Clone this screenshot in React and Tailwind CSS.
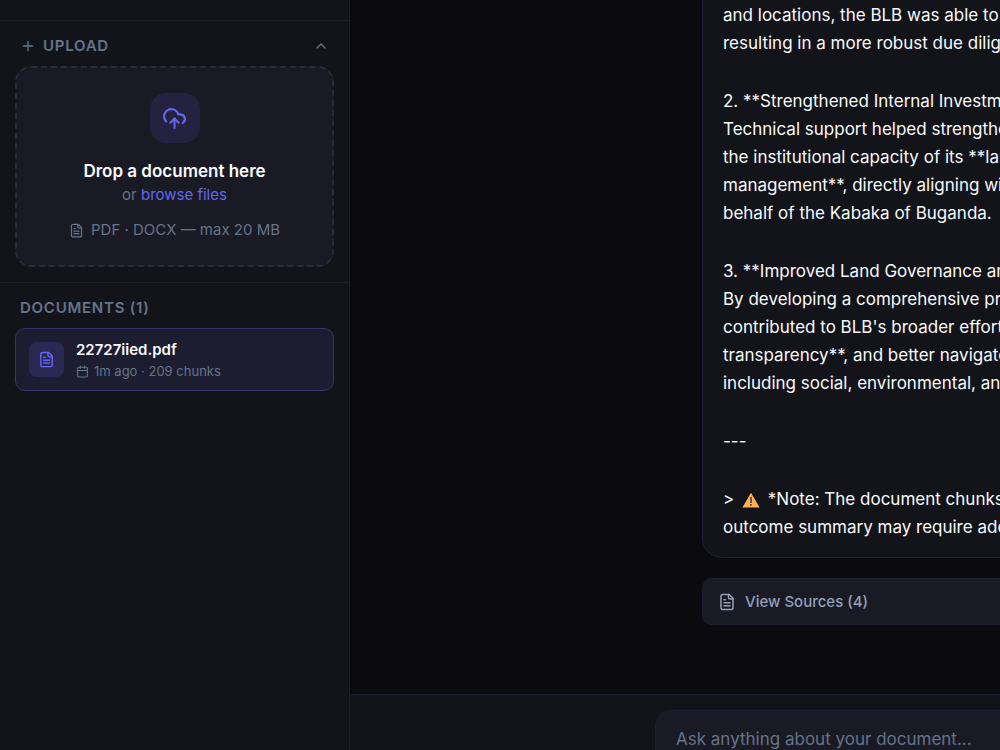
import React, { useState } from 'react';
import { Calendar, ChevronUp, Plus } from 'lucide-react';

const documents = [{ id: 1, name: '22727iied.pdf', age: '1m ago', chunks: 209 }];

const answer = [
    ['and locations, the BLB was able to', 'resulting in a more robust due diligence'],
    [
        '2. **Strengthened Internal Investment',
        'Technical support helped strengthen',
        'the institutional capacity of its **land',
        'management**, directly aligning with',
        'behalf of the Kabaka of Buganda.',
    ],
    [
        '3. **Improved Land Governance and',
        'By developing a comprehensive process',
        "contributed to BLB's broader efforts",
        'transparency**, and better navigate',
        'including social, environmental, and',
    ],
    ['---'],
];

const Icon = ({ size, children }) => (
    <svg
        width={size}
        height={size}
        viewBox="0 0 24 24"
        fill="none"
        stroke="currentColor"
        strokeWidth="2"
        strokeLinecap="round"
        strokeLinejoin="round"
        aria-hidden="true"
    >
        {children}
    </svg>
);

const FileIcon = ({ size }) => (
    <Icon size={size}>
        <path d="M15 2H6a2 2 0 0 0-2 2v16a2 2 0 0 0 2 2h12a2 2 0 0 0 2-2V7Z" />
        <path d="M14 2v4a2 2 0 0 0 2 2h4" />
        <path d="M10 9H8" />
        <path d="M16 13H8" />
        <path d="M16 17H8" />
    </Icon>
);

const CloudIcon = ({ size }) => (
    <Icon size={size}>
        <path d="M4 14.899A7 7 0 1 1 15.71 8h1.79a4.5 4.5 0 0 1 2.5 8.242" />
        <path d="M12 12v9" />
        <path d="m16 16-4-4-4 4" />
    </Icon>
);

const WarningSign = () => (
    <svg viewBox="0 0 18 16" className="mx-[3px] inline-block h-4 w-[18px] align-[-3px]" role="img" aria-label="Warning">
        <path d="M9 0.8 17.6 15.5H0.4Z" fill="#ffb04f" />
        <path d="M8.2 5h1.6v6H8.2zM8.2 12h1.6v1.7H8.2z" fill="#4a4038" />
    </svg>
);

const UploadPanel = () => {
    const [open, setOpen] = useState(true);

    return (
        <section className="border-b border-[#1e1e2e] px-[15px] pb-[15px]">
            <button
                type="button"
                onClick={() => setOpen(!open)}
                aria-expanded={open}
                className="flex w-full items-center gap-[7px] px-[5px] pt-3 pb-2 text-[15px] leading-[25px] font-semibold tracking-wider text-[#64748b]"
            >
                <Plus size={16} />
                <span>UPLOAD</span>
                <ChevronUp size={16} className={open ? 'ml-auto' : 'ml-auto rotate-180'} />
            </button>
            {open && (
                <label
                    htmlFor="upload"
                    className="flex cursor-pointer flex-col items-center rounded-2xl border-2 border-dashed border-[#2a2a3d] bg-[#1a1a24] px-5 pt-[25px] pb-6"
                >
                    <span className="flex size-[50px] items-center justify-center rounded-2xl bg-[#24223f] text-[#6366f1]">
                        <CloudIcon size={25} />
                    </span>
                    <span className="mt-4 text-[17px] leading-6 font-semibold text-slate-50">Drop a document here</span>
                    <span className="text-[15px] leading-6 text-[#64748b]">
                        or <span className="text-[#6366f1]">browse files</span>
                    </span>
                    <span className="mt-3 flex items-center gap-[7px] text-[15px] leading-[22px] text-[#64748b]">
                        <FileIcon size={15} />
                        PDF · DOCX — max 20 MB
                    </span>
                    <input id="upload" type="file" accept=".pdf,.docx" className="sr-only" />
                </label>
            )}
        </section>
    );
};

const DocumentList = () => (
    <section className="px-[15px] pt-3">
        <h2 className="px-[5px] pb-2 text-[15px] leading-[25px] font-semibold tracking-wider text-[#64748b]">
            DOCUMENTS ({documents.length})
        </h2>
        <ul>
            {documents.map((doc) => (
                <li key={doc.id}>
                    <button
                        type="button"
                        className="flex w-full items-center gap-3 rounded-[10px] border border-[#36346f] bg-[#1d1d31] px-[13px] py-[9px] text-left"
                    >
                        <span className="flex size-[35px] items-center justify-center rounded-lg bg-[#2a2954] text-[#6366f1]">
                            <FileIcon size={17} />
                        </span>
                        <span>
                            <span className="block text-[15px] leading-[23px] font-semibold text-slate-50">{doc.name}</span>
                            <span className="flex items-center gap-[5px] text-[13px] leading-5 text-[#64748b]">
                                <Calendar size={13} />
                                {doc.age} · {doc.chunks} chunks
                            </span>
                        </span>
                    </button>
                </li>
            ))}
        </ul>
    </section>
);

const App = () => {
    const [question, setQuestion] = useState('');

    return (
        <div className="flex h-screen overflow-hidden bg-[#0a0a0f] font-['Inter',sans-serif]">
            <aside className="w-[350px] shrink-0 border-r border-[#1e1e2e] bg-[#13141a]">
                <div className="h-[21px] border-b border-[#1e1e2e]" />
                <UploadPanel />
                <DocumentList />
            </aside>
            <main className="flex min-w-0 flex-1 flex-col">
                <div className="flex min-h-0 flex-1 flex-col justify-end gap-5 overflow-hidden pb-[69px] pl-[352px]">
                    <article className="flex flex-col gap-[30px] rounded-bl-[20px] border-b border-l border-[#1e1e2e] bg-[#13141a] pt-5 pb-4 pl-5 text-[17px] leading-7 whitespace-nowrap text-slate-50">
                        {answer.map((lines) => (
                            <p key={lines[0]}>
                                {lines.map((line) => (
                                    <span key={line} className="block">{line}</span>
                                ))}
                            </p>
                        ))}
                        <p>
                            <span className="block">&gt; <WarningSign /> *Note: The document chunks</span>
                            <span className="block">outcome summary may require additional</span>
                        </p>
                    </article>
                    <button
                        type="button"
                        className="flex shrink-0 items-center gap-[9px] rounded-l-[10px] border border-r-0 border-[#1e1e2e] bg-[#1a1a24] px-[15px] py-[11px] text-[15px] leading-[23px] font-medium text-slate-400"
                    >
                        <FileIcon size={18} />
                        View Sources (4)
                    </button>
                </div>
                <form className="h-14 shrink-0 overflow-hidden border-t border-[#1e1e2e] bg-[#13141a] pt-[15px] pl-[305px]">
                    <input
                        type="text"
                        aria-label="Question"
                        placeholder="Ask anything about your document..."
                        value={question}
                        onChange={(e) => setQuestion(e.target.value)}
                        className="h-[57px] w-full rounded-l-[16px] border border-r-0 border-[#1e1e2e] bg-[#1a1a24] pl-5 text-[17px] text-slate-50 outline-none placeholder:text-[#64748b]"
                    />
                </form>
            </main>
        </div>
    );
};

export default App;
